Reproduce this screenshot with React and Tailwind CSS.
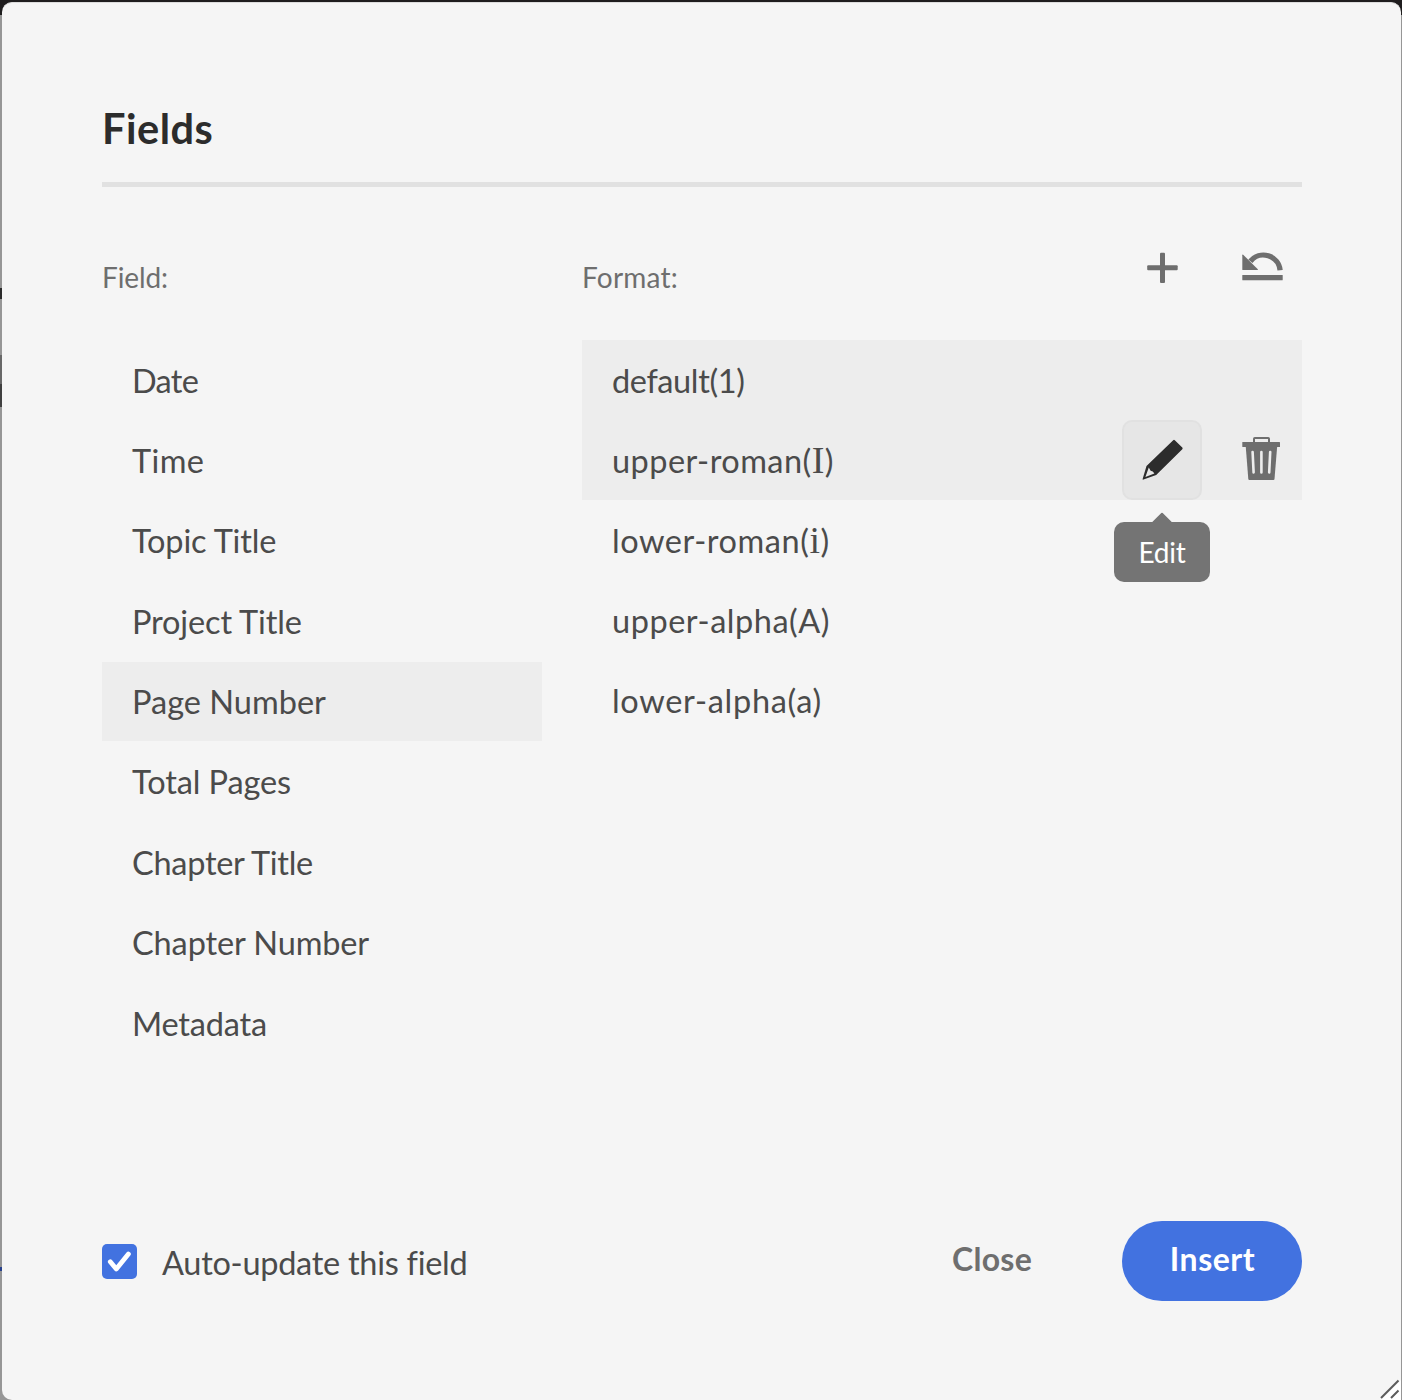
import React from 'react';

const FIELDS = [
  { label: 'Date', tracking: 'tracking-[-0.7px]' },
  { label: 'Time', tracking: 'tracking-[0.4px]' },
  { label: 'Topic Title', tracking: 'tracking-[-0.15px]' },
  { label: 'Project Title', tracking: 'tracking-[-0.15px]' },
  { label: 'Page Number', tracking: 'tracking-[0.01px]', selected: true },
  { label: 'Total Pages', tracking: 'tracking-[-0.1px]' },
  { label: 'Chapter Title', tracking: 'tracking-[-0.28px]' },
  { label: 'Chapter Number', tracking: 'tracking-[-0.12px]' },
  { label: 'Metadata', tracking: 'tracking-[-0.2px]' },
];

function PlusIcon() {
  return (
    <svg className="size-20" viewBox="0 0 80 80" fill="#6e6e6e">
      <rect x="38" y="24.7" width="5" height="30.4" rx="1" />
      <rect x="25.2" y="37.2" width="30.5" height="5" rx="1" />
    </svg>
  );
}

function RevertIcon() {
  return (
    <svg className="size-20" viewBox="0 0 80 80" fill="#6e6e6e">
      <path d="M20.3 27.2q0-1.2.9-.4L35.8 41.2q.6.8-.4.8H20.8q-.5 0-.5-.5Z" />
      <path d="M28.4 33.2A16.8 16.8 0 0 1 58.1 42.2" fill="none" stroke="#6e6e6e" strokeWidth="5.3" />
      <rect x="20.3" y="47" width="40.4" height="5.3" rx="0.6" />
    </svg>
  );
}

function PencilIcon() {
  return (
    <svg className="size-full" viewBox="0 0 80 80" fill="#2c2c2c" fillRule="evenodd">
      <path d="M51.2 20.2q.8-.8 1.6 0l7.5 7.4q.8.8 0 1.6L34.2 55.1 21.5 59.6q-1.2.4-.8-.8L24.5 46ZM26.8 47.5 23.4 56.9 32.4 53.4 30.8 51.4 28.6 50.8Z" />
    </svg>
  );
}

function TrashIcon() {
  return (
    <svg className="size-20" viewBox="0 0 80 80" fill="#6e6e6e">
      <path d="M32 23v-4.2q0-.8.8-.8h13.4q.8 0 .8.8V23" fill="none" stroke="#6e6e6e" strokeWidth="2" />
      <rect x="20.3" y="22" width="37.7" height="5" rx="0.6" />
      <path d="M23.7 26H55.2L52.5 59q-.1 1-1 1H27.4q-1 0-1.1-1Z" />
      <path d="M30.6 32 31.6 52.4M39.4 32V52.4M48.2 32 47.2 52.4" stroke="#ededed" strokeWidth="2.6" strokeLinecap="round" />
    </svg>
  );
}

function BackdropLeft() {
  return (
    <div className="flex w-0.5 shrink-0 flex-col bg-[#969696]">
      <div className="h-[15px] bg-[#1f1d1e]" />
      <div className="mt-[273px] h-[11px] bg-[#2b2b2b]" />
      <div className="mt-14 h-[29px] bg-[#686868]" />
      <div className="h-[23px] bg-[#404040]" />
      <div className="mt-[860px] h-1 bg-[#27418b]" />
    </div>
  );
}

export default function App() {
  return (
    <div className="flex h-[1400px] w-[1402px] overflow-hidden bg-[linear-gradient(#1f1d1e_15px,#969696_15px)] font-[Lato,sans-serif] text-[32.5px] leading-[40px] text-[#4b4b4b]">
      <BackdropLeft />
      <div className="relative mt-0.5 mr-px flex w-[1399px] shrink-0 flex-col rounded-[10px] border-t border-[#dcdcdc] bg-[#f5f5f5] pr-[99px] pl-[100px]">
        <h1 className="mt-[99px] h-[80px] pt-px text-[41.5px] leading-[50px] font-bold tracking-[0.5px] text-[#2c2c2c]">
          Fields
        </h1>
        <div className="h-[5px] w-[1200px] shrink-0 bg-[#e1e1e1]" />

        <div className="mt-[41px] flex h-[1000px] shrink-0 gap-10">
          <section className="w-[440px]">
            <div className="h-[112px] pt-[29px] text-[28px] tracking-[-0.1px] text-[#6e6e6e]">Field:</div>
            <ul>
              {FIELDS.map(({ label, tracking, selected }) => (
                <li
                  key={label}
                  className={`mb-[1.4px] flex h-[79px] items-center pl-[30px] ${tracking} ${selected ? 'bg-[#ededed]' : ''}`}
                >
                  <span className="pt-0.5">{label}</span>
                </li>
              ))}
            </ul>
          </section>

          <section className="w-[720px]">
            <div className="flex h-[112px]">
              <div className="flex-1 pt-[29px] text-[28px] tracking-[0.2px] text-[#6e6e6e]">Format:</div>
              <div className="flex h-20 gap-5">
                <PlusIcon />
                <RevertIcon />
              </div>
            </div>
            <ul>
              <li className="flex h-20 items-center bg-[#ededed] pl-[30px] tracking-[-0.38px]">
                <span className="pt-0.5">default(1)</span>
              </li>
              <li className="flex h-20 items-center bg-[#ededed] pl-[30px]">
                <span className="flex-1 pt-0.5 tracking-[0.45px]">
                  upper-roman(<span className="font-['Liberation_Serif',serif] text-[38px] leading-none">I</span>)
                </span>
                <div className="relative mr-5 size-20 rounded-[10px] border-2 border-[#e1e1e1] bg-[#e6e6e6]">
                  <div className="-m-0.5 size-20">
                    <PencilIcon />
                  </div>
                  <div className="absolute top-[90px] left-[-10px] flex w-24 flex-col items-center">
                    <svg className="h-[11px] w-5" viewBox="0 0 20 11" fill="#747474">
                      <path d="M0 10.2 9.3 1q.7-.7 1.4 0L20 10.2V11H0Z" />
                    </svg>
                    <div className="-mt-px flex h-[60px] w-24 items-center justify-center rounded-[10px] bg-[#747474] text-[28px] tracking-[-0.2px] text-white">
                      Edit
                    </div>
                  </div>
                </div>
                <TrashIcon />
              </li>
              <li className="flex h-20 items-center pl-[30px] tracking-[0.55px]">
                <span className="pt-0.5">
                  lower-roman(<span className="font-['Liberation_Serif',serif] text-[38px] leading-none">i</span>)
                </span>
              </li>
              <li className="flex h-20 items-center pl-[30px] tracking-[0.53px]">
                <span className="pt-0.5">upper-alpha(A)</span>
              </li>
              <li className="flex h-20 items-center pl-[30px] tracking-[0.7px]">
                <span className="pt-px">lower-alpha(a)</span>
              </li>
            </ul>
          </section>
        </div>

        <footer className="mt-[-7px] flex h-20 w-[1200px] shrink-0 items-center">
          <div className="flex size-[35px] items-center justify-center rounded-[5px] bg-[#4272e0]">
            <svg className="size-[35px]" viewBox="0 0 35 35" fill="none" stroke="#fff" strokeWidth="4.8" strokeLinecap="round" strokeLinejoin="round">
              <path d="M8.3 17.8 14.3 25 26.4 10" />
            </svg>
          </div>
          <span className="flex-1 pt-1 pl-[25px] tracking-[-0.28px]">Auto-update this field</span>
          <button className="w-[180px] pr-[20px] pb-1 text-[32px] font-bold tracking-[0.3px] text-[#6e6e6e]">Close</button>
          <button className="ml-[30px] h-20 w-[180px] rounded-full bg-[#4272e0] pb-1 pl-px text-[32px] font-bold tracking-[0.5px] text-white">
            Insert
          </button>
        </footer>

        <svg className="absolute right-0 bottom-0 size-[22px]" viewBox="0 0 22 22">
          <path d="M2 22 22 2V22Z" fill="#fff" />
          <path d="M2 20 19.5 2.5M12 20 19.5 12.5" stroke="#5c5c5c" strokeWidth="2" />
        </svg>
      </div>
    </div>
  );
}
